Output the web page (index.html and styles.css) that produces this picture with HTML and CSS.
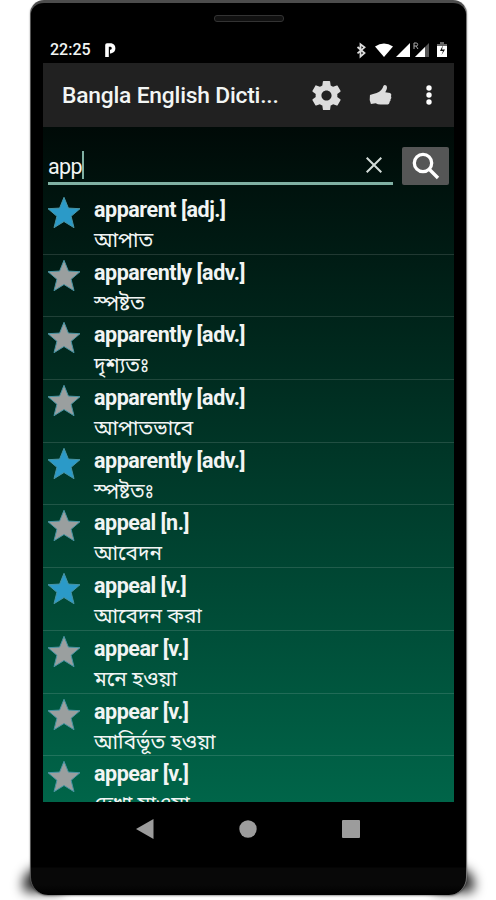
FILE: index.html
```html
<!DOCTYPE html>
<html lang="en">
<head>
    <meta charset="UTF-8">
    <meta name="viewport" content="width=device-width, initial-scale=1.0">
    <title>Bangla English Dictionary</title>
    <link rel="stylesheet" href="styles.css">
</head>
<body>
<svg class="symbols">
    <symbol id="star" viewBox="0 0 34 32">
        <path d="M17 .8L21.400 11.600L33 12.200L24.100 19.800L27 31.200L17 25L7 31.200L9.900 19.800L1 12.200L12.600 11.600z"></path>
    </symbol>
</svg>
<div class="phone">
    <div class="speaker"></div>

    <div class="status-bar">
        <span class="clock">22:25</span>
        <svg class="p-icon" viewBox="0 0 12 14">
            <path d="M2 14V7.500M2 8V2h4a3.400 3.400 0 0 1 0 6.600H5" fill="none" stroke="#fff" stroke-width="3.600" stroke-linejoin="round"></path>
        </svg>
        <svg class="status-icons" viewBox="0 0 92 18">
            <path d="M1.500 6l7 6-4 3.600V3.400l4 3-7 6" fill="none" stroke="#ddd" stroke-width="1.800"></path>
            <path d="M19 5.500Q28 -.5 37 5.500L28 16z" fill="#fff"></path>
            <path d="M54 2v14H40z" fill="#fff"></path>
            <path d="M73 2v14H59z" fill="#555"></path>
            <path d="M69 6v10H59z" fill="#fff"></path>
            <path d="M58 8V2h2.200a1.500 1.500 0 0 1 0 3H58m2 0l2 3" fill="none" stroke="#aaa" stroke-width="1"></path>
            <path d="M81 3h3V1h4v2h3v3H81z" fill="#666"></path>
            <path d="M81 5h10v11H81z" fill="#fff"></path>
            <path d="M87 4l-3 6h3l-1.500 4 3.500-5.500h-3z" fill="#111"></path>
        </svg>
    </div>

    <div class="screen">
        <header class="app-bar">
            <h1 class="app-title">Bangla English Dicti...</h1>
            <svg class="icon-settings" viewBox="2 2 20 20">
                <path d="M19.430 12.980c.04-.32.07-.64.07-.98s-.03-.66-.07-.98l2.110-1.650c.19-.15.24-.42.12-.64l-2-3.460c-.12-.22-.39-.3-.61-.22l-2.490 1c-.52-.4-1.080-.73-1.690-.98l-.38-2.650C14.460 2.180 14.250 2 14 2h-4c-.25 0-.46.18-.49.42l-.38 2.650c-.61.25-1.170.59-1.690.98l-2.490-1c-.23-.09-.49 0-.61.22l-2 3.460c-.13.22-.07.49.12.64l2.110 1.650c-.04.32-.07.65-.07.98s.03.66.07.98l-2.110 1.650c-.19.15-.24.42-.12.64l2 3.460c.12.22.39.3.61.22l2.490-1c.52.4 1.080.73 1.690.98l.38 2.650c.03.24.24.42.49.42h4c.25 0 .46-.18.49-.42l.38-2.650c.61-.25 1.170-.59 1.690-.98l2.490 1c.23.09.49 0 .61-.22l2-3.460c.12-.22.07-.49-.12-.64l-2.110-1.650zM12 15.500c-1.930 0-3.500-1.570-3.500-3.500s1.570-3.500 3.500-3.500 3.500 1.570 3.500 3.500-1.570 3.500-3.500 3.500z"></path>
            </svg>
            <svg class="icon-like" viewBox="0 0 24 22">
                <path d="M1 11Q4 10 8 9Q14 6 15 1.500Q16 0 18 1Q20 3 17 8L22 9Q24 10 23 12.500Q24 14 22.500 15.500Q23 17 21.500 18Q21.500 21 18 21H12Q9 21 7 19.500L2 20.500Q0 16 1 11z"></path>
            </svg>
            <svg class="icon-more" viewBox="0 0 8 22">
                <circle cx="4" cy="4" r="2.700"></circle>
                <circle cx="4" cy="11" r="2.700"></circle>
                <circle cx="4" cy="18" r="2.700"></circle>
            </svg>
        </header>

        <div class="search-row">
            <div class="search-field">
                <span class="search-text">app</span>
                <span class="cursor"></span>
                <svg class="icon-clear" viewBox="0 0 16 16">
                    <path d="M.7.7l14.600 14.600M15.300.7L.7 15.300"></path>
                </svg>
            </div>
            <button class="search-button">
                <svg class="icon-search" viewBox="0 0 28 28">
                    <circle cx="11" cy="11" r="8.700"></circle>
                    <path d="M17.500 17.500l8.500 8.500"></path>
                </svg>
            </button>
        </div>

        <ul class="results">
            <li class="result">
                <svg class="star star-on"><use href="#star"></use></svg>
                <div class="entry"><b class="word">apparent [adj.]</b><span class="meaning">আপাত</span></div>
            </li>
            <li class="result">
                <svg class="star"><use href="#star"></use></svg>
                <div class="entry"><b class="word">apparently [adv.]</b><span class="meaning">স্পষ্টত</span></div>
            </li>
            <li class="result">
                <svg class="star"><use href="#star"></use></svg>
                <div class="entry"><b class="word">apparently [adv.]</b><span class="meaning">দৃশ্যতঃ</span></div>
            </li>
            <li class="result">
                <svg class="star"><use href="#star"></use></svg>
                <div class="entry"><b class="word">apparently [adv.]</b><span class="meaning">আপাতভাবে</span></div>
            </li>
            <li class="result">
                <svg class="star star-on"><use href="#star"></use></svg>
                <div class="entry"><b class="word">apparently [adv.]</b><span class="meaning">স্পষ্টতঃ</span></div>
            </li>
            <li class="result">
                <svg class="star"><use href="#star"></use></svg>
                <div class="entry"><b class="word">appeal [n.]</b><span class="meaning">আবেদন</span></div>
            </li>
            <li class="result">
                <svg class="star star-on"><use href="#star"></use></svg>
                <div class="entry"><b class="word">appeal [v.]</b><span class="meaning">আবেদন করা</span></div>
            </li>
            <li class="result">
                <svg class="star"><use href="#star"></use></svg>
                <div class="entry"><b class="word">appear [v.]</b><span class="meaning">মনে হওয়া</span></div>
            </li>
            <li class="result">
                <svg class="star"><use href="#star"></use></svg>
                <div class="entry"><b class="word">appear [v.]</b><span class="meaning">আবির্ভূত হওয়া</span></div>
            </li>
            <li class="result">
                <svg class="star"><use href="#star"></use></svg>
                <div class="entry"><b class="word">appear [v.]</b><span class="meaning">দেখা যাওয়া</span></div>
            </li>
        </ul>
    </div>

    <nav class="nav-bar">
        <svg class="nav-icon" viewBox="0 0 18 20"><path d="M17.500 0v20L0 10z"></path></svg>
        <svg class="nav-icon" viewBox="0 0 18 20"><circle cx="9" cy="10" r="8.700"></circle></svg>
        <svg class="nav-icon" viewBox="0 0 18 20"><rect y="1" width="18" height="18" rx="1"></rect></svg>
    </nav>
</div>
</body>
</html>
```
FILE: styles.css
```css
* {
    box-sizing: border-box;
    margin: 0;
    padding: 0;
}

body {
    background-color: #fff;
    height: 900px;
    overflow: hidden;
    font-family: Roboto, "Noto Sans", "Noto Sans Bengali", sans-serif;
    color: #f2f5f4;
}

.symbols {
    display: none;
}

.phone {
    position: relative;
    display: flex;
    flex-direction: column;
    width: 437px;
    height: 895px;
    margin-left: 30px;
    padding: 0 12px;
    background: linear-gradient(#000 864px, #080808 865px, #080808 882px, #000);
    border-top: 3px solid #4c4c4c;
    border-left: 1px solid #555;
    border-right: 1px solid #777;
    border-radius: 14px 14px 18px 18px;
    box-shadow: 0 1px 2px rgba(0, 0, 0, 0.4);
}

/* soft shadow under the bottom corners */
.phone::before,
.phone::after {
    content: "";
    position: absolute;
    z-index: -1;
    bottom: 3px;
    width: 40px;
    height: 24px;
    background-color: rgba(0, 0, 0, 0.85);
    border-radius: 16px 16px 4px 4px;
    filter: blur(6px);
}

.phone::before {
    left: -8px;
}

.phone::after {
    right: -8px;
}

.speaker {
    width: 70px;
    height: 7px;
    margin: 12px auto 0;
    background-color: #111;
    border: 1px solid #333;
    border-radius: 3px;
}

.status-bar {
    display: flex;
    align-items: center;
    height: 41px;
    padding: 15px 6px 0 7px;
}

.clock {
    width: 55px;
    font-size: 16px;
    font-weight: 500;
    line-height: 18px;
}

.p-icon {
    width: 12px;
    height: 14px;
}

.status-icons {
    width: 92px;
    height: 18px;
    margin-left: auto;
}

.screen {
    height: 739px;
    overflow: hidden;
    background: linear-gradient(#000a07 64px, #00120d 120px, #006549);
}

.app-bar {
    display: flex;
    align-items: center;
    height: 64px;
    padding: 0 21px 0 19px;
    background-color: #212121;
}

.app-title {
    width: 250px;
    font-size: 22.8px;
    font-weight: 500;
    letter-spacing: -0.2px;
    white-space: nowrap;
}

.icon-settings {
    width: 29px;
    height: 29px;
    fill: #ddd;
}

.icon-like {
    width: 23px;
    height: 22px;
    margin-left: 28px;
    fill: #ddd;
}

.icon-more {
    width: 8px;
    height: 22px;
    margin-left: auto;
    fill: #fff;
}

.search-row {
    display: flex;
    align-items: flex-start;
    height: 65px;
    padding: 20px 5px 0;
}

.search-field {
    display: flex;
    align-items: center;
    width: 345px;
    height: 38px;
    border-bottom: 3px solid #80b0a3;
}

.search-text {
    padding-top: 4px;
    font-size: 21.5px;
    letter-spacing: -0.6px;
    line-height: 35px;
}

.cursor {
    width: 2px;
    height: 28px;
    background-color: #80b0a3;
}

.icon-clear {
    width: 16px;
    height: 16px;
    margin: 0 11px 0 auto;
    stroke: #d3dcd9;
    stroke-width: 2;
}

.search-button {
    display: flex;
    align-items: center;
    justify-content: center;
    width: 47px;
    height: 38px;
    margin-left: 9px;
    background-color: #555656;
    border: none;
    border-radius: 2px;
}

.icon-search {
    width: 28px;
    height: 28px;
    fill: none;
    stroke: #fff;
    stroke-width: 3.3;
}

.results {
    list-style: none;
}

.result {
    display: flex;
    height: 62.7px;
    padding: 4px 4px 0;
    border-bottom: 1px solid rgba(255, 255, 255, 0.13);
}

.star {
    width: 34px;
    height: 33px;
    fill: #9a9f9f;
    stroke: #4894a4;
    stroke-width: 1;
}

.star-on {
    fill: #2b9ac8;
}

.entry {
    display: flex;
    flex-direction: column;
    margin-left: 13px;
    white-space: nowrap;
}

.word {
    flex-shrink: 0;
    height: 29px;
    font-size: 21.5px;
    font-weight: 700;
    letter-spacing: -0.46px;
    line-height: 27px;
}

.meaning {
    font-size: 20.8px;
    line-height: 30px;
}

.nav-bar {
    display: flex;
    justify-content: space-between;
    padding: 17px 94px 0 93px;
}

.nav-icon {
    width: 18px;
    height: 20px;
    fill: #9c9c9c;
}
```
